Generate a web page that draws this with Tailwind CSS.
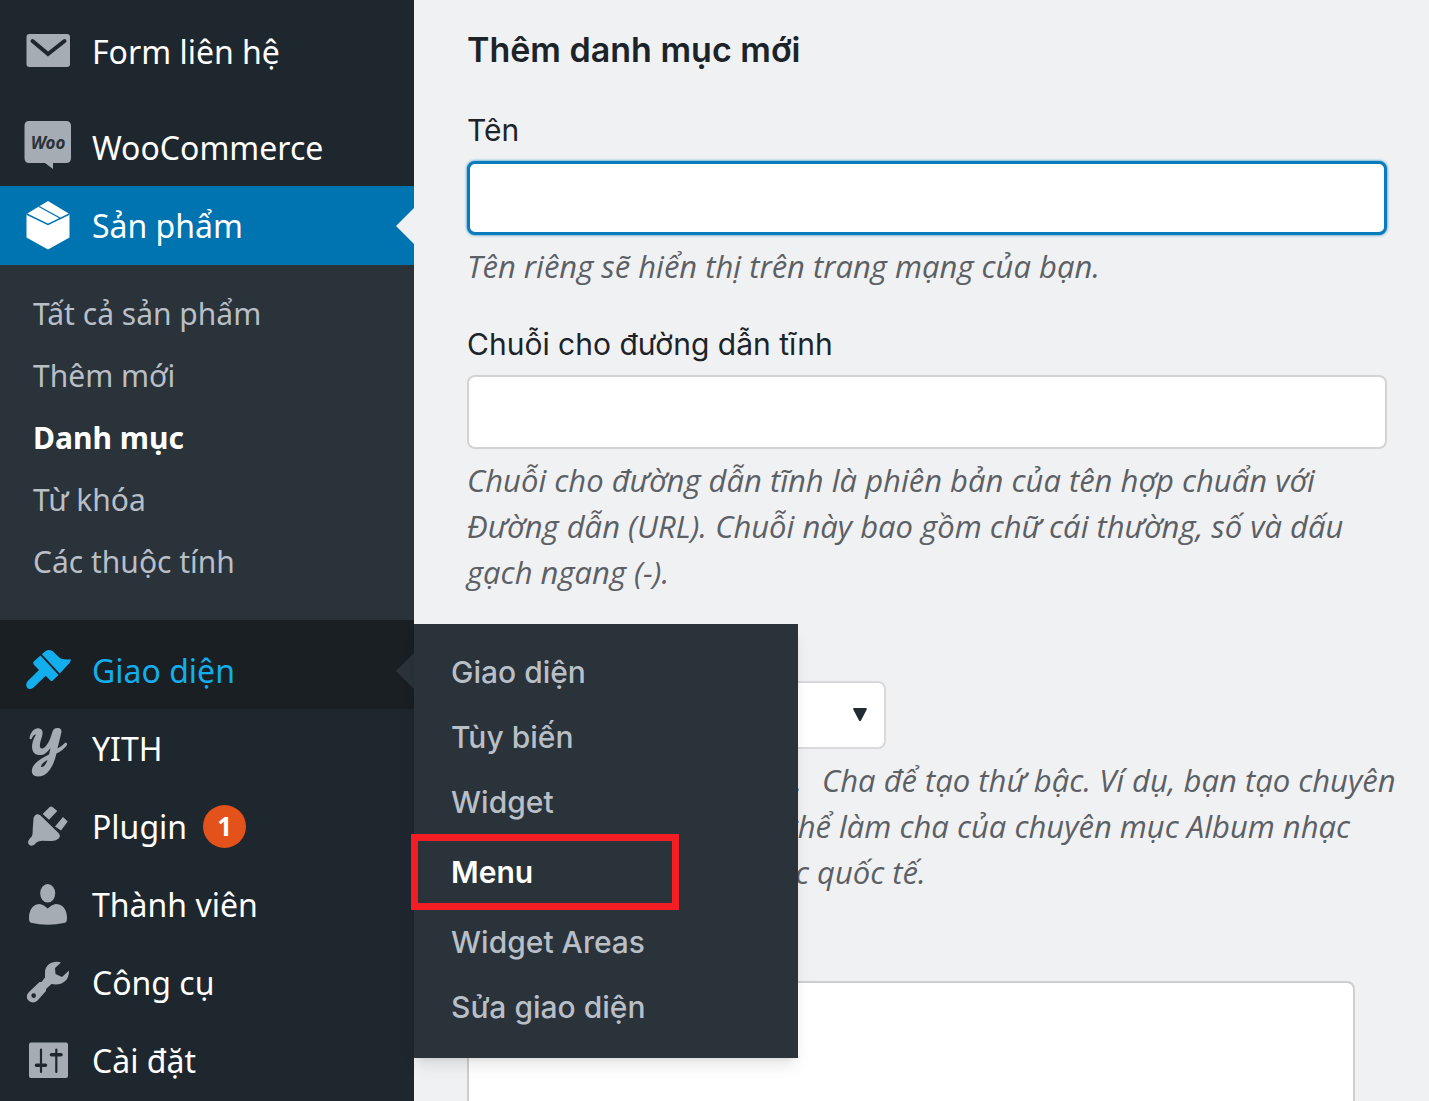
<!DOCTYPE html>
<html lang="vi">
<head>
  <meta charset="UTF-8">
  <meta name="viewport" content="width=device-width, initial-scale=1">
  <title>Danh mục sản phẩm</title>
  <script src="https://cdn.jsdelivr.net/npm/@tailwindcss/browser@4"></script>
</head>
<body class="bg-[#f0f1f2]">
<div class="flex h-screen overflow-hidden">

  <!-- Admin menu -->
  <nav class="relative z-10 w-[414px] shrink-0 bg-[#1f272e] font-['Noto_Sans',sans-serif] text-[32px] leading-[45px] text-white">
    <ul class="pt-3">
      <li class="mb-[18px]">
        <a href="#" class="flex h-[78px] items-center gap-5 pl-6">
          <svg class="size-12 text-[#a5acb4]" viewBox="0 0 48 48" fill="currentColor">
            <rect x="2.5" y="7" width="43.5" height="33" rx="3"/>
            <path d="M8.500 14 24 27 40.500 14" fill="none" stroke="#1f272e" stroke-width="4" stroke-linecap="round"/>
          </svg>
          Form liên hệ
        </a>
      </li>
      <li>
        <a href="#" class="flex h-[78px] items-center gap-5 pl-6">
          <svg class="size-12 overflow-visible text-[#a5acb4]" viewBox="0 0 48 48" fill="currentColor">
            <path d="M5-2H42Q47-2 47 3V35Q47 40 42 40H29V46L21 40H5Q.5 40 .5 35V3Q.5-2 5-2Z"/>
            <text x="24" y="25.500" text-anchor="middle" font-size="17" font-weight="700" font-style="italic" fill="#2a323a">Woo</text>
          </svg>
          WooCommerce
        </a>
      </li>
      <li>
        <a href="#" class="relative flex h-[79px] items-center gap-5 bg-[#0073b1] pl-6">
          <svg class="size-12 overflow-visible" viewBox="0 0 48 48" fill="currentColor">
            <path d="M24-1 45.500 12V35.500L24 47.500 2.500 35.500V12Z"/>
            <path d="M2.500 12 24 22.500 45.500 12M15 4.500 36 16" fill="none" stroke="#0073b1" stroke-width="1.400"/>
          </svg>
          Sản phẩm
          <svg class="absolute right-0 h-9 w-[18px] text-[#f0f1f2]" viewBox="0 0 18 36" fill="currentColor"><path d="M18 0V36L0 18Z"/></svg>
        </a>
        <ul class="bg-[#2a323a] pt-[17px] pb-7 text-[30px] text-[#b8bfc7]">
          <li><a href="#" class="flex h-[62px] items-center pl-[33px]">Tất cả sản phẩm</a></li>
          <li><a href="#" class="flex h-[62px] items-center pl-[33px]">Thêm mới</a></li>
          <li><a href="#" class="flex h-[62px] items-center pl-[33px] font-bold text-white">Danh mục</a></li>
          <li><a href="#" class="flex h-[62px] items-center pl-[33px]">Từ khóa</a></li>
          <li><a href="#" class="flex h-[62px] items-center pl-[33px]">Các thuộc tính</a></li>
        </ul>
      </li>
      <li class="relative">
        <a href="#" class="relative flex h-[89px] items-center gap-5 bg-[#191f23] pt-3 pl-6 text-[#12aeee]">
          <svg class="size-12" viewBox="0 0 48 48" fill="currentColor">
            <path d="M17.800 7.300 22 3.700Q25 2 28.500 4L35 10.200Q38 13 46.500 12.300Q47.500 13.500 45.500 16L35.800 26.500Z"/>
            <path d="M16.500 8.500 34.500 28 28.500 33.700Q27.500 34.500 26.500 33.500L21.700 28.800 9.500 40.500Q5.500 43.500 3 40.500Q1 37 4 33.800L15 23 9.700 17.500Q8.700 16 9.700 14.500Z"/>
          </svg>
          Giao diện
          <svg class="absolute right-0 h-9 w-[18px] text-[#2a323a]" viewBox="0 0 18 36" fill="currentColor"><path d="M18 0V36L0 18Z"/></svg>
        </a>
        <!-- Flyout -->
        <ul class="absolute top-1 left-full w-96 bg-[#2a323a] pt-4 pb-[18px] font-['Inter',sans-serif] text-[30px] font-medium text-[#b8bfc7] shadow-lg">
          <li><a href="#" class="flex h-[65px] items-center pl-[37px]">Giao diện</a></li>
          <li><a href="#" class="flex h-[65px] items-center pl-[37px]">Tùy biến</a></li>
          <li><a href="#" class="flex h-[65px] items-center pl-[37px]">Widget</a></li>
          <li><a href="#" class="-mt-px -ml-[3px] flex h-[76px] w-[268px] items-center border-[7px] border-[#f51d24] pl-[33px] font-semibold text-white">Menu</a></li>
          <li><a href="#" class="flex h-[65px] items-center pl-[37px]">Widget Areas</a></li>
          <li><a href="#" class="flex h-[65px] items-center pl-[37px]">Sửa giao diện</a></li>
        </ul>
      </li>
      <li>
        <a href="#" class="flex h-[78px] items-center gap-5 pl-6">
          <svg class="size-12 overflow-visible text-[#a5acb4]" viewBox="0 0 48 48" fill="currentColor">
            <path d="M5.500 14C7 7 11 3.500 15.500 4.500C19.500 5.500 19 10 17.500 14C15.500 20 15 24.500 18 24.500C21.500 24.500 26 17 28 9C29 5 31 3.800 34 4C37.500 4.300 38 6.500 37 10L33.500 24.500Q38 22 41.500 18.500Q43.500 18.500 43 21Q38.500 27 32.500 29.500C29.500 42 24 52.500 14 52.500C7 52 7 46.500 9 42.500C12 37 19 33.500 25 30.500L26.500 24C22 30 19 31.500 15 31C9 30.500 7 25 8.500 19C9.500 14 12.500 10.500 11.500 10.500C9.500 10.500 8.500 13 7.500 15Q6 16 5.500 14ZM23.500 36C19.500 38 17 40.500 17 43C19.500 43.500 22 40.500 23.500 36Z"/>
          </svg>
          YITH
        </a>
      </li>
      <li>
        <a href="#" class="flex h-[78px] items-center gap-5 pl-6">
          <svg class="size-12 text-[#a5acb4]" viewBox="0 0 48 48" fill="currentColor">
            <path d="M9.500 16Q11.500 10.500 16 13L34.500 31Q37.500 34.500 34 37Q31 39.500 26 39L18 38.700Q14.500 38.700 12.500 40.500Q9.500 44.500 6.500 43.500Q3 42 4.500 38.500Q6 36 7.700 34.500Q8.700 33 8.700 28Z"/>
            <path d="M18.700 12 25.700 5Q27 4 28.500 5L33.300 9 25 17.700ZM31 24.500 39 15 43.700 19.500 37 28.500Z"/>
          </svg>
          Plugin
          <span class="-ml-1 flex size-[43px] items-center justify-center rounded-full bg-[#e4521b] font-['Open_Sans',sans-serif] text-[26px] font-bold">1</span>
        </a>
      </li>
      <li>
        <a href="#" class="flex h-[78px] items-center gap-5 pl-6">
          <svg class="size-12 text-[#a5acb4]" viewBox="0 0 48 48" fill="currentColor">
            <ellipse cx="23.700" cy="13.300" rx="7.500" ry="9.300"/>
            <path d="M5 38C5 30 9 24 16 24Q20 24.500 23.700 28.500Q27.500 24.500 31.500 24C39 24 43 30 43 38Q43 42 41 42.800Q32 44.700 24 44.700Q15 44.700 7 42.800Q5 42 5 38Z"/>
          </svg>
          Thành viên
        </a>
      </li>
      <li>
        <a href="#" class="flex h-[78px] items-center gap-5 pl-6">
          <svg class="size-12 text-[#a5acb4]" viewBox="0 0 48 48" fill="currentColor">
            <path fill-rule="evenodd" d="M37 4.500C30 2 21 6 21 14.500V19.500L17.500 24H15.500L5 34C2 37 2.500 40.500 4.500 42.500C7.500 45.300 11 44.800 13.500 42.500L22 33V31L27.500 26C36 28 45.500 24 45 12.500L38 19 31.500 16 31 10ZM9.700 35.300A2.300 2.300 0 1 1 9.600 39.900A2.300 2.300 0 1 1 9.700 35.300Z"/>
          </svg>
          Công cụ
        </a>
      </li>
      <li>
        <a href="#" class="flex h-[78px] items-center gap-5 pl-6">
          <svg class="size-12 text-[#a5acb4]" viewBox="0 0 48 48" fill="currentColor">
            <rect x="5" y="6.500" width="39" height="35.500" rx="2"/>
            <path d="M17 13.500V36M32.300 13.500V36" stroke="#1f272e" stroke-width="2.200" stroke-linecap="round"/>
            <path d="M12.500 29.300H21.500M27.500 18.700H37" stroke="#1f272e" stroke-width="3.600" stroke-linecap="round"/>
          </svg>
          Cài đặt
        </a>
      </li>
    </ul>
  </nav>

  <!-- Add category form -->
  <main class="min-w-0 flex-1 pt-[27px] pr-[42px] pl-[53px] font-['Inter',sans-serif] text-[30px] leading-[45px] text-[#1d2429]">
    <h2 class="mb-9 text-[34px] leading-[45px] font-semibold">Thêm danh mục mới</h2>
    <form class="flex flex-col gap-[33px]">
      <div class="flex flex-col gap-2">
        <label for="name">Tên</label>
        <input id="name" type="text" class="h-[74px] w-full rounded-lg border-3 border-[#0a7cbd] bg-white px-4 shadow-[0_0_3px_#0a7cbd] outline-none">
        <p class="font-['Open_Sans',sans-serif] text-[31px] leading-[46px] text-[#5c6065] italic">Tên riêng sẽ hiển thị trên trang mạng của bạn.</p>
      </div>
      <div class="flex flex-col gap-2">
        <label for="slug">Chuỗi cho đường dẫn tĩnh</label>
        <input id="slug" type="text" class="h-[74px] w-full rounded-lg border-2 border-[#d2d3d5] bg-white px-4 outline-none">
        <p class="font-['Open_Sans',sans-serif] text-[31px] leading-[46px] text-[#5c6065] italic">Chuỗi cho đường dẫn tĩnh là phiên bản của tên hợp chuẩn với Đường dẫn (URL). Chuỗi này bao gồm chữ cái thường, số và dấu gạch ngang (-).</p>
      </div>
      <div class="flex flex-col gap-2">
        <label for="parent" class="invisible">Danh mục cha</label>
        <div class="relative w-[419px]">
          <select id="parent" class="block h-[68px] w-full appearance-none rounded-lg border-2 border-[#d8d9db] bg-white px-4">
            <option></option>
          </select>
          <svg class="pointer-events-none absolute top-[26px] right-[18px] h-[15px] w-4 text-[#1f2d33]" viewBox="0 0 16 15" fill="currentColor"><path d="M2 1H14Q15.500 1 14.700 2.500L9 13.500Q8 15 7 13.500L1.300 2.500Q.5 1 2 1Z"/></svg>
        </div>
        <!-- The start of each line runs under the flyout -->
        <div class="font-['Open_Sans',sans-serif] text-[31px] leading-[46px] whitespace-nowrap text-[#5c6065] italic">
          <p class="flex gap-5"><span class="w-[335px] shrink-0 text-right">.</span>Cha để tạo thứ bậc. Ví dụ, bạn tạo chuyên</p>
          <p class="flex gap-2"><span class="w-[364px] shrink-0 text-right">thể</span>làm cha của chuyên mục Album nhạc</p>
          <p class="flex gap-2"><span class="w-[342px] shrink-0 text-right">nhạc</span>quốc tế.</p>
        </div>
      </div>
      <div class="flex flex-col gap-2">
        <label for="description" class="invisible">Mô tả</label>
        <textarea id="description" rows="5" class="mr-8 resize-none rounded-lg border-2 border-[#cdced0] bg-white px-4 outline-none"></textarea>
      </div>
    </form>
  </main>

</div>
</body>
</html>
